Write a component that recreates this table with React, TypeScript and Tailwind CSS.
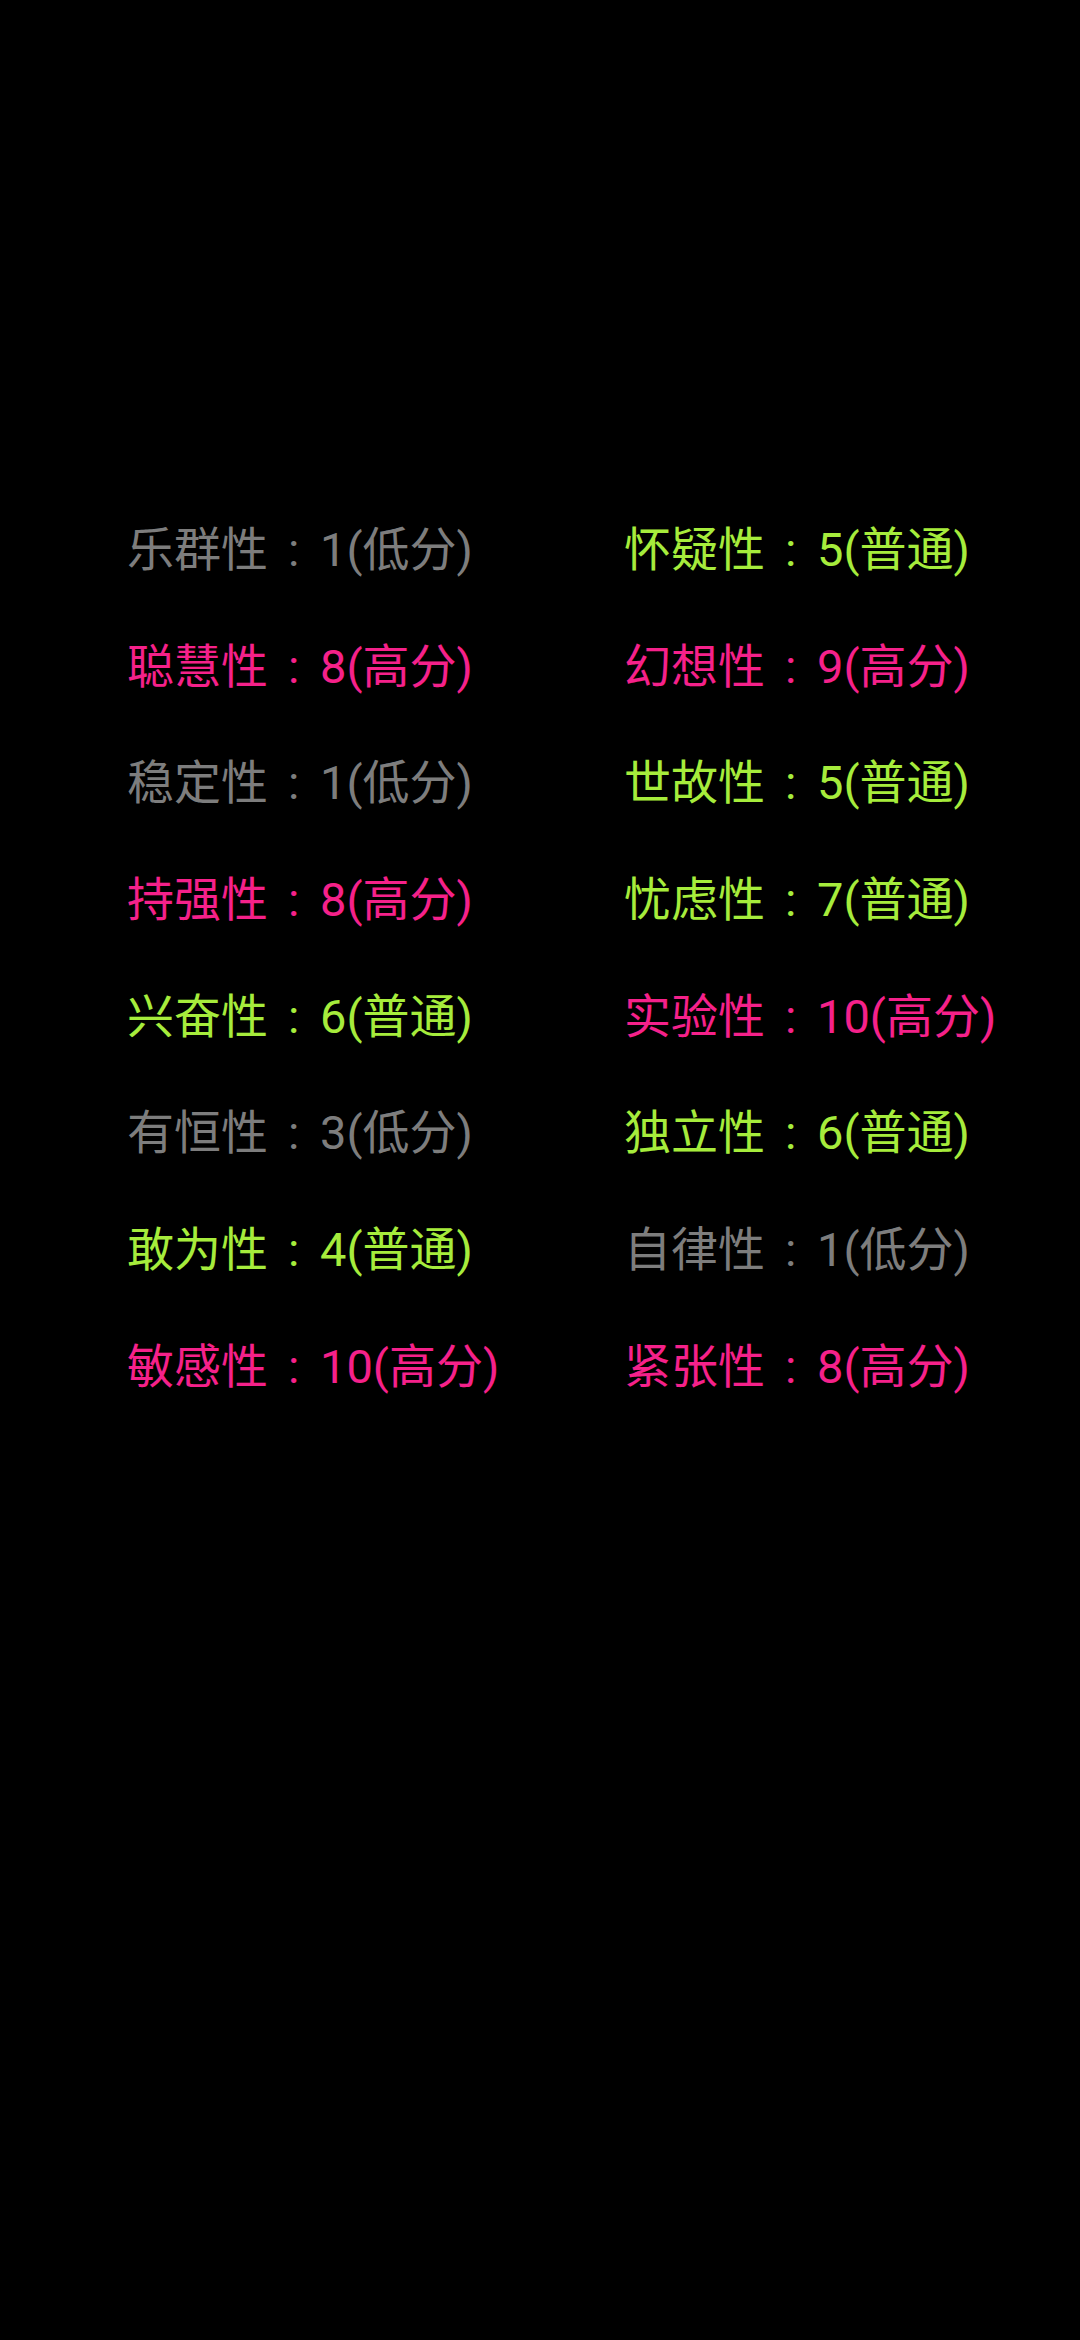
const GRAY = "text-[#7d7d7d]";
const PINK = "text-[#f5218a]";
const GREEN = "text-[#a6ec3c]";

type Item = { name: string; score: number; level: string };

const left: Item[] = [
  { name: "乐群性", score: 1, level: "低分" },
  { name: "聪慧性", score: 8, level: "高分" },
  { name: "稳定性", score: 1, level: "低分" },
  { name: "持强性", score: 8, level: "高分" },
  { name: "兴奋性", score: 6, level: "普通" },
  { name: "有恒性", score: 3, level: "低分" },
  { name: "敢为性", score: 4, level: "普通" },
  { name: "敏感性", score: 10, level: "高分" },
];

const right: Item[] = [
  { name: "怀疑性", score: 5, level: "普通" },
  { name: "幻想性", score: 9, level: "高分" },
  { name: "世故性", score: 5, level: "普通" },
  { name: "忧虑性", score: 7, level: "普通" },
  { name: "实验性", score: 10, level: "高分" },
  { name: "独立性", score: 6, level: "普通" },
  { name: "自律性", score: 1, level: "低分" },
  { name: "紧张性", score: 8, level: "高分" },
];

function colorFor(level: string) {
  if (level === "高分") return PINK;
  if (level === "普通") return GREEN;
  return GRAY;
}

// full-width colon look: Roboto colon with padding so it sits like the reference
function Row({ item }: { item: Item }) {
  return (
    <div className={`h-[116.7px] flex items-center whitespace-nowrap ${colorFor(item.level)}`}>
      <span>{item.name}</span>
      <span className="inline-block w-[52px] pl-[20px] text-left">:</span>
      <span>{item.score}({item.level})</span>
    </div>
  );
}

export default function App() {
  return (
    <div
      className="min-h-[2340px] w-[1080px] bg-black pt-[491px] pl-[127px] text-[47px] leading-none"
      style={{ fontFamily: 'Roboto, "Noto Sans CJK SC", sans-serif' }}
    >
      <div className="grid grid-cols-[497px_auto]">
        <div className="flex flex-col">
          {left.map((it) => <Row key={it.name} item={it} />)}
        </div>
        <div className="flex flex-col">
          {right.map((it) => <Row key={it.name} item={it} />)}
        </div>
      </div>
    </div>
  );
}
